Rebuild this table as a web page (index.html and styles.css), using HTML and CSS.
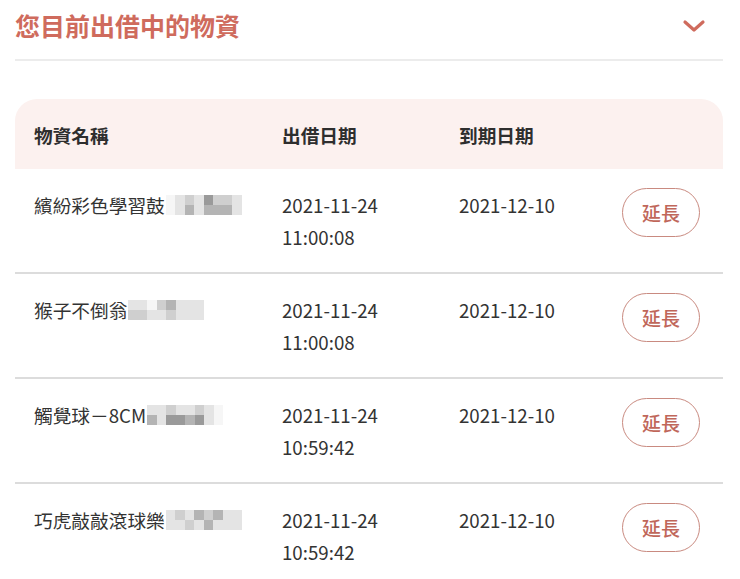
FILE: index.html
```html
<!DOCTYPE html>
<html lang="zh-Hant">
<head>
<meta charset="utf-8">
<link rel="stylesheet" href="styles.css">
</head>
<body>
<div class="page">
  <div class="title-bar">
    <h1 class="title">您目前出借中的物資</h1>
    <svg class="chevron" width="24" height="14" viewBox="0 0 24 14"><path d="M3 3 L12 11 L21 3" fill="none" stroke="#cf6b5d" stroke-width="3.2" stroke-linecap="round" stroke-linejoin="round"/></svg>
  </div>
  <div class="table">
    <div class="thead">
      <div class="c-name">物資名稱</div>
      <div class="c-date">出借日期</div>
      <div class="c-due">到期日期</div>
      <div class="c-act"></div>
    </div>
    <div class="row">
      <div class="c-name">繽紛彩色學習鼓<span class="mosaic"><i class="m0"></i><i class="m1"></i><i class="m2"></i><i class="m1"></i><i class="m4"></i><i class="m2"></i><i class="m2"></i><i class="m1"></i><i class="m0"></i><i class="m1"></i><i class="m3"></i><i class="m1"></i><i class="m3"></i><i class="m3"></i><i class="m3"></i><i class="m1"></i></span></div>
      <div class="c-date">2021-11-24<br>11:00:08</div>
      <div class="c-due">2021-12-10</div>
      <div class="c-act"><button class="btn">延長</button></div>
    </div>
    <div class="row">
      <div class="c-name">猴子不倒翁<span class="mosaic"><i class="m1"></i><i class="m1"></i><i class="m0"></i><i class="m2"></i><i class="m3"></i><i class="m1"></i><i class="m1"></i><i class="m1"></i><i class="m2"></i><i class="m2"></i><i class="m1"></i><i class="m1"></i><i class="m2"></i><i class="m1"></i><i class="m1"></i><i class="m1"></i></span></div>
      <div class="c-date">2021-11-24<br>11:00:08</div>
      <div class="c-due">2021-12-10</div>
      <div class="c-act"><button class="btn">延長</button></div>
    </div>
    <div class="row">
      <div class="c-name">觸覺球－8CM<span class="mosaic"><i class="m1"></i><i class="m1"></i><i class="m2"></i><i class="m1"></i><i class="m1"></i><i class="m2"></i><i class="m1"></i><i class="m0"></i><i class="m3"></i><i class="m1"></i><i class="m4"></i><i class="m4"></i><i class="m3"></i><i class="m4"></i><i class="m1"></i><i class="m0"></i></span></div>
      <div class="c-date">2021-11-24<br>10:59:42</div>
      <div class="c-due">2021-12-10</div>
      <div class="c-act"><button class="btn">延長</button></div>
    </div>
    <div class="row">
      <div class="c-name">巧虎敲敲滾球樂<span class="mosaic"><i class="m1"></i><i class="m2"></i><i class="m1"></i><i class="m3"></i><i class="m2"></i><i class="m3"></i><i class="m1"></i><i class="m1"></i><i class="m1"></i><i class="m1"></i><i class="m2"></i><i class="m1"></i><i class="m3"></i><i class="m1"></i><i class="m1"></i><i class="m1"></i></span></div>
      <div class="c-date">2021-11-24<br>10:59:42</div>
      <div class="c-due">2021-12-10</div>
      <div class="c-act"><button class="btn">延長</button></div>
    </div>
  </div>
</div>
</body>
</html>
```
FILE: styles.css
```css
* { box-sizing: border-box; }
html, body { margin: 0; padding: 0; background: #fff; }
body {
  font-family: "Noto Sans CJK TC", "Noto Sans", sans-serif;
  color: #333;
  overflow: hidden;
}
.page {
  width: 708px;
  margin-left: 15px;
}
.title-bar {
  height: 61px;
  border-bottom: 2px solid #ececec;
  display: flex;
  align-items: flex-start;
  justify-content: space-between;
}
.title {
  margin: 6px 0 0 0;
  font-size: 25px;
  line-height: 38px;
  font-weight: 700;
  color: #cf6b5d;
}
.chevron {
  margin: 19px 17px 0 0;
}
.table {
  margin-top: 38px;
}
.thead, .row {
  display: grid;
  grid-template-columns: 248px 177px 163px 78px;
  padding-left: 19px;
}
.thead {
  height: 70px;
  align-items: center;
  background: #fcf1ef;
  border-radius: 22px 22px 0 0;
  font-weight: 700;
  font-size: 18.7px;
  color: #2e2e2e;
}
.row {
  padding-top: 20px;
  padding-bottom: 19px;
  border-bottom: 2px solid #dcdcdc;
  font-size: 18.7px;
  line-height: 32px;
  align-items: start;
}
.row:last-child { border-bottom: none; }
.c-name { white-space: nowrap; display: flex; align-items: center; height: 32px; }
.mosaic {
  display: inline-grid;
  grid-template-columns: repeat(8, 9.5px);
  grid-template-rows: 10px 10px;
  margin-left: 1px;
}
.mosaic i { display: block; }
.m0 { background: #f6f6f6; }
.m1 { background: #e4e4e4; }
.m2 { background: #cfcfcf; }
.m3 { background: #b4b4b4; }
.m4 { background: #9a9a9a; }
.btn {
  width: 78px;
  height: 49px;
  margin-top: -1px;
  border: 1.5px solid #c98a80;
  border-radius: 25px;
  background: #fff;
  color: #c0675a;
  font-family: "Noto Sans CJK TC", sans-serif;
  font-size: 19px;
  font-weight: 500;
  padding: 0;
}
```
